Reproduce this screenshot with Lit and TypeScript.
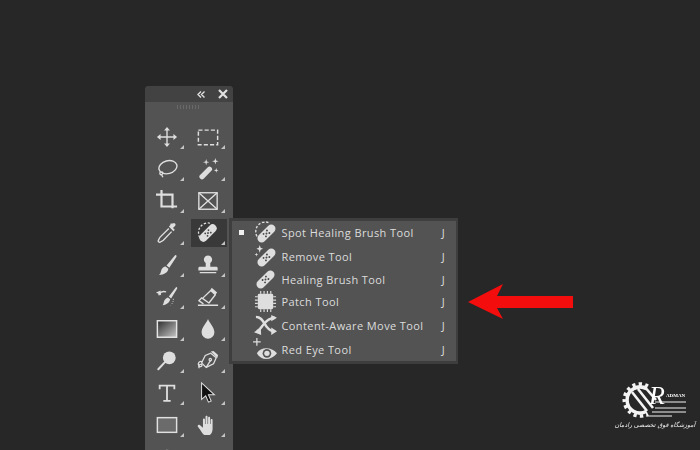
import { LitElement, html, css, svg } from "lit";
import { customElement } from "lit/decorators.js";

const bandage = (dx = 0, dy = 0) => svg`<g transform="translate(${dx} ${dy}) rotate(-45 12 12)">
  <rect x="0.5" y="7.6" width="23" height="8.800" rx="4.400" fill="currentColor"/>
  <g fill="#4a4a4a"><circle cx="9.500" cy="10.200" r="1"/><circle cx="14.500" cy="10.200" r="1"/><circle cx="12" cy="12" r="1"/><circle cx="9.500" cy="13.800" r="1"/><circle cx="14.500" cy="13.800" r="1"/></g>
</g>`;

const tools = [
  svg`<g fill="none" stroke="currentColor" stroke-width="1.500"><path d="M12 4v16M4 12h16"/></g><path fill="currentColor" d="M12 1l3.200 4H8.800zM12 23l-3.200-4h6.400zM1 12l4-3.200v6.400zM23 12l-4 3.200V8.800z"/>`,
  svg`<rect x="1.500" y="4.500" width="21" height="16" fill="none" stroke="currentColor" stroke-width="1.600" stroke-dasharray="4.500 2.300"/>`,
  svg`<g fill="none" stroke="currentColor" stroke-width="1.500"><ellipse cx="13" cy="10" rx="10" ry="7" transform="rotate(-15 13 10)"/><path d="M5 15c-2 2 0 4 1.500 3s1-3-.5-3M6 18l1.500 3"/></g>`,
  svg`<rect x="1" y="14" width="17" height="5.500" rx="2.500" transform="rotate(-45 9 16.500)" fill="currentColor"/><path fill="currentColor" d="M10 1l.8 2.700L13.500 4.500l-2.700.8L10 8l-.8-2.700L6.500 4.500l2.700-.8zM20 0l.8 2.700 2.700.8-2.700.8L20 7l-.8-2.700-2.700-.8 2.700-.8zM21 11l.6 1.900 1.900.6-1.900.6L21 16l-.6-1.900-1.900-.6 1.900-.6z"/>`,
  svg`<path fill="none" stroke="currentColor" stroke-width="2.400" d="M0 5h18v15M6 0v18h17"/>`,
  svg`<g fill="none" stroke="currentColor" stroke-width="1.500"><rect x="2" y="3" width="20" height="18"/><path d="M2 3l20 18M22 3L2 21"/></g>`,
  svg`<path fill="currentColor" d="M14 5l5 5 1.500-1.500-2-2 2.500-2.500a1.800 1.800 0 00-2.500-2.500L16 1.500 15.500 3.500z"/><path fill="none" stroke="currentColor" stroke-width="1.500" d="M14 7L4.500 16.500c-1 1-1.200 2.500-2 3.500-.7 1 1 2.700 2 2 1-.8 2.500-1 3.500-2L17 10.500"/>`,
  svg`${bandage()}<path fill="none" stroke="currentColor" stroke-width="1.400" stroke-dasharray="2.500 1.800" d="M3 17C0 11 2 4 9 1.500c3-.8 5-.5 6.500.5"/>`,
  svg`<path fill="currentColor" d="M21 1c1.500 0 2 1 1 2.500L14.500 15l-3-2.500zM10.500 13.500l3 2.600c-.6 3.900-4 6.400-10.500 6.900 2.500-1.500 2-3.500 3-6 .7-1.900 2.500-3.300 4.500-3.500z"/>`,
  svg`<path fill="currentColor" d="M12 1.500a4.500 4.500 0 012.500 8.200V14H21a1.500 1.500 0 011.500 1.500V18h-21v-2.500A1.500 1.500 0 013 14h6.500V9.700A4.500 4.500 0 0112 1.500zM3 19.500h18V21H3z"/>`,
  svg`<path fill="currentColor" d="M22 1c1 0 1.500.8 1 2l-6.500 10.500-2.500-2zM13 12.500l2.500 2c-.6 3-3 6-8.500 6.500 1.200-1.200 1.300-3 2-5 .6-1.500 2.600-3.300 4-3.500z"/><path fill="none" stroke="currentColor" stroke-width="1.500" d="M11 6.500C7 5 4 7 3 10"/><path fill="currentColor" d="M0 7l5-2 .5 5z"/><path fill="none" stroke="currentColor" stroke-dasharray="1 1.500" d="M19 14c0 3-1 5-3 7"/>`,
  svg`<path fill="none" stroke="currentColor" stroke-width="1.500" stroke-linejoin="round" d="M15 5l5 4.500-7 9-7-5zM7 19.500L2 16l3.500-3.500M1 21h22"/><path fill="currentColor" d="M16 2l6 5-2 2.500-5.500-5z"/>`,
  svg`<defs><linearGradient id="gr" x1="0" y1="0" x2="1" y2="1"><stop offset="0" stop-color="#2b2b2b"/><stop offset="1" stop-color="#c8c8c8"/></linearGradient></defs><rect x="1.500" y="3" width="21" height="18" fill="url(#gr)" stroke="#e4e4e4" stroke-width="1.600"/>`,
  svg`<path fill="currentColor" d="M12 1c1 3.500 7 9 7 14.500a7 7 0 01-14 0C5 10 11 4.500 12 1z"/>`,
  svg`<circle cx="14.500" cy="8.500" r="7" fill="currentColor"/><path stroke="currentColor" stroke-width="2.200" stroke-linecap="round" d="M9.500 13.500L2.500 21"/>`,
  svg`<g fill="none" stroke="currentColor" stroke-width="1.400"><path d="M15 3.500l6 5-3 6.500-8 4-5-5 4-8z"/><path d="M6 13c-4-2-6 3-3 5 2 .7 3-1 2-2-2-1-4 1-2.500 4"/><path d="M10 19l5-8"/><circle cx="14.500" cy="10.500" r="1.300"/></g><path fill="currentColor" d="M15 1.500l3-.5 5 4.500-.8 3.300z"/>`,
  svg`<path fill="none" stroke="currentColor" stroke-width="2" d="M12 4v16M8 20.500h8M4 8V4h16v4"/>`,
  svg`<path fill="#111" stroke="#ddd" stroke-width="1.100" d="M5 1v18l4.500-4 3 7 3-1.300-3-6.700h6.500z"/>`,
  svg`<rect x="1.500" y="4" width="21" height="16" fill="#6b6b6b" stroke="#e0e0e0" stroke-width="1.600"/>`,
  svg`<path fill="currentColor" d="M8 23c-2-1-3-4-7-9-1-1.500.7-3 2-2l3.500 3V6c0-1.500 2-1.500 2.200 0v5h.6V3c0-1.500 2.200-1.500 2.200 0V11h.6V4c0-1.500 2.200-1.500 2.200 0v7h.6V6.500c0-1.500 2.100-1.500 2.100 0V16c0 3-1.500 7-4 7z"/>`,
  svg`<circle cx="12" cy="13" r="8" fill="none" stroke="currentColor" stroke-width="1.800"/>`,
  svg``,
];

const menu = [
  { label: "Spot Healing Brush Tool", checked: true, icon: svg`${bandage(1, 1)}<path fill="none" stroke="currentColor" stroke-width="1.400" stroke-dasharray="2.500 1.800" d="M3 16C0 10 3 3 9 1.500c3-.8 5-.5 7 .5"/>` },
  { label: "Remove Tool", icon: svg`${bandage(1, 1)}<path fill="currentColor" d="M6 0l.9 2.800L9.500 4l-2.600 1L6 8 5 5 2.500 4 5 2.800zM2.500 8l.5 1.500 1.500.5-1.500.5-.5 1.500-.5-1.500L.500 10 2 9.500z"/>` },
  { label: "Healing Brush Tool", icon: bandage() },
  { label: "Patch Tool", icon: svg`<rect x="4" y="4" width="16" height="16" rx="1.500" fill="currentColor"/><path stroke="currentColor" stroke-width="1.200" d="M7 1v3M10.500 1v3M14 1v3M17.500 1v3M7 20v3M10.500 20v3M14 20v3M17.500 20v3M1 7h3M1 10.500h3M1 14h3M1 17.500h3M20 7h3M20 10.500h3M20 14h3M20 17.500h3"/>` },
  { label: "Content-Aware Move Tool", icon: svg`<g fill="none" stroke="currentColor" stroke-width="2.600"><path d="M2 3c6 0 8 6 11 10 2 2.500 4 5 8 5"/><path d="M22 4C16 4 12 8 9 12c-2 2.500-3 5-6 6"/></g><path fill="currentColor" d="M0 19l7-5 .5 8zM24 18l-6-4v8zM24 4l-6 3.500V1z"/>` },
  { label: "Red Eye Tool", icon: svg`<path stroke="currentColor" stroke-width="1.300" d="M3 0v8M-1 4h8"/><path fill="currentColor" d="M3 16c4-7 15-7 21 0-6 8-17 8-21 0z"/><circle cx="13.500" cy="16" r="4.500" fill="#535353"/><circle cx="13.500" cy="16" r="2.800" fill="currentColor"/>` },
];

@customElement("app-root")
export class AppRoot extends LitElement {
  static styles = css`
    :host { display: block; position: relative; width: 700px; height: 450px; overflow: hidden; background: #272727; font-family: "Open Sans", "Liberation Sans", sans-serif; }
    .blur { position: absolute; inset: 0; filter: blur(0.35px); }
    .toolbar { position: absolute; left: 145px; top: 86px; width: 88px; height: 400px; background: #535353; border-radius: 4px 4px 0 0; overflow: hidden; display: flex; flex-direction: column; }
    .head { height: 16px; background: #424242; display: flex; align-items: center; justify-content: flex-end; gap: 13px; padding-right: 5px; color: #e0e0e0; flex: none; }
    .head svg { display: block; }
    .grip { height: 19px; flex: none; display: flex; justify-content: center; align-items: flex-start; padding-top: 3px; box-sizing: border-box; }
    .grip svg { display: block; }
    .tools { display: grid; grid-template-columns: 40px 40px; column-gap: 1px; grid-auto-rows: 32px; padding-left: 2px; }
    .cell { position: relative; display: flex; align-items: center; justify-content: center; color: #dedede; }
    .cell svg.ic { width: 22px; height: 22px; display: block; position: relative; }
    .cell.sel::before { content: ""; position: absolute; left: 3px; right: 1px; top: 2px; bottom: 2px; background: #393939; }
    .cell .tri { position: absolute; right: 3px; bottom: 4px; width: 0; height: 0; border-left: 4px solid transparent; border-bottom: 4px solid #c4c4c4; }
    .menu { position: absolute; left: 229px; top: 218px; width: 229px; height: 146px; box-sizing: border-box; border: 3px solid #3e3e3e; border-right-width: 2px; background: #535353; display: grid; grid-template-rows: 24px 24px 22px 22px 26px 22px; }
    .row { display: flex; align-items: center; color: #dcdcdc; font-size: 11px; letter-spacing: 0.4px; padding-bottom: 2px; box-sizing: border-box; }
    .check { width: 5px; height: 5px; margin-left: 7px; flex: none; }
    .check.on { background: #f0f0f0; }
    .row svg { width: 23px; height: 23px; margin-left: 9.500px; flex: none; color: #dedede; overflow: visible; }
    .label { margin-left: 5px; flex: 1; white-space: nowrap; }
    .key { margin-right: 11px; }
    .arrow { position: absolute; left: 468px; top: 284px; display: block; }
    .logo { position: absolute; left: 610px; top: 365px; display: block; }
    .logo .fa { font-family: "DejaVu Sans", sans-serif; font-size: 6.200px; font-style: italic; fill: #f2f2f2; }
    .logo .r { font-family: "Liberation Serif", serif; font-style: italic; font-size: 26px; fill: #fff; }
    .logo .ad { font-family: "Liberation Serif", serif; font-size: 5px; font-weight: 700; fill: #fff; }
  `;

  render() {
    return html`<div class="blur">
      <div class="toolbar">
        <div class="head">
          <svg width="8" height="7" viewBox="0 0 8 7" fill="none" stroke="currentColor" stroke-width="1.400"><path d="M4 .5L1 3.500 4 6.500M7.500 .5L4.500 3.500 7.500 6.500"/></svg>
          <svg width="10" height="10" viewBox="0 0 10 10" stroke="currentColor" stroke-width="2.200"><path d="M1 1l8 8M9 1l-8 8"/></svg>
        </div>
        <div class="grip"><svg width="24" height="4" viewBox="0 0 24 4" stroke="#6a6a6a" stroke-width="1"><path d="M.500 0v4M3.500 0v4M6.500 0v4M9.500 0v4M12.500 0v4M15.500 0v4M18.500 0v4M21.500 0v4"/></svg></div>
        <div class="tools">
          ${tools.map((t, i) => html`<div class="cell ${i === 7 ? "sel" : ""}">
            <svg class="ic" viewBox="0 0 24 24">${t}</svg>
            ${i < 22 ? html`<span class="tri"></span>` : ""}
          </div>`)}
        </div>
      </div>
      <div class="menu">
        ${menu.map((m) => html`<div class="row">
          <span class="check ${m.checked ? "on" : ""}"></span>
          <svg viewBox="0 0 24 24">${m.icon}</svg>
          <span class="label">${m.label}</span>
          <span class="key">J</span>
        </div>`)}
      </div>
      <svg class="arrow" width="105" height="35" viewBox="0 0 105 35"><path fill="#f40d0d" d="M0 18L35 0 29 12H105V24H29L35 35z"/></svg>
      <svg class="logo" width="90" height="75" viewBox="0 0 90 75">
        <g fill="none" stroke="#f4f4f4">
          <path stroke-width="3.500" d="M36.500 23.700A13 13 0 1 0 36.500 46.300"/>
          <path stroke-width="3.500" stroke-dasharray="3.200 3.200" d="M38 21A16 16 0 1 0 38 49"/>
          <path stroke-width="2.600" d="M22 27l15 19M28 24l15 19M34 21l12 14"/>
          <path stroke-width="1" d="M45 37h31M45 43h31M42 47h34M36 51h26"/>
        </g>
        <text class="r" x="39" y="39">R</text>
        <text class="ad" x="56" y="32">ADMAN</text>
        <text class="fa" x="45" y="62" text-anchor="middle">آموزشگاه فوق تخصصی رادمان</text>
      </svg>
    </div>`;
  }
}
